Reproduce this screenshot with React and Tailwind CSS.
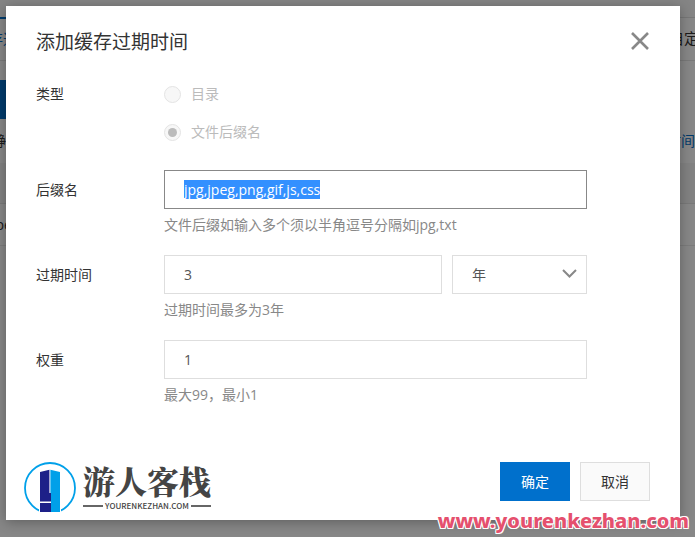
import React, { useEffect, useRef, useState } from 'react';

const inputClass = "h-[39px] border border-[#dedede] bg-white px-[19px] text-sm text-[#555] outline-none rounded-none focus:border-[#888]";

function PageBehind() {
    return (
        <div className="min-h-screen bg-white text-sm text-[#333] overflow-hidden" aria-hidden="true">
            <div className="h-[17px] bg-[#fbfbfb]"></div>
            <div className="flex justify-between h-11 border-b border-[#e5e5e5]">
                <div className="-ml-3 w-24 border-t-2 border-[#0070cc] text-[#0070cc] flex items-center whitespace-nowrap text-[15px]">存过期</div>
                <div className="flex-1 border-t border-[#e0e0e0] flex items-center justify-end">
                    <span className="-mr-1 text-[15px]">自定</span>
                </div>
            </div>
            <div className="mt-[19px] h-[39px] w-20 bg-[#0070cc]"></div>
            <div className="flex justify-between items-center h-11">
                <span className="-ml-2">静态</span>
                <span className="text-[#0070cc]">时间</span>
            </div>
            <div className="h-[41px] bg-[#f5f5f5] border-b border-[#e5e5e5]"></div>
            <div className="h-[42px] border-b border-[#ebebeb] flex items-center">
                <span className="-ml-2">jpeg</span>
            </div>
        </div>
    );
}

function Logo() {
    return (
        <div className="flex gap-[7px]">
            <svg width="52" height="50" viewBox="0 0 52 50" aria-hidden="true">
                <circle cx="26" cy="26" r="25" fill="none" stroke="#00a0e9" strokeWidth="1.8" />
                <path d="M15 8h22v42H15z" fill="#fff" />
                <path d="M16 10 25.4 7.8V31H27V39.5H16z" fill="#1d2088" />
                <path d="M16 41H27V50H16z" fill="#1d2088" />
                <path d="M26.4 7.8 36 10V50H27V31h-.6z" fill="#00a0e9" />
            </svg>
            <div className="text-[#444]">
                <div className="text-[32px] leading-9 pb-0.5 font-black whitespace-nowrap font-['Noto_Serif_CJK_SC','Noto_Sans_CJK_SC',serif]">游人客栈</div>
                <div className="flex items-center gap-0.5">
                    <span className="flex-1 h-0.5 bg-[#666]"></span>
                    <span className="text-[8px] leading-3 font-medium font-['Noto_Sans_CJK_SC',sans-serif]">YOURENKEZHAN.COM</span>
                    <span className="flex-1 h-0.5 bg-[#666]"></span>
                </div>
            </div>
        </div>
    );
}

function Field({ label, id, hint, children }) {
    return (
        <div className="flex items-start">
            <label htmlFor={id} className="w-32 shrink-0 leading-[39px] text-[#333]">{label}</label>
            <div className="flex-1 max-w-[423px]">
                <div className="flex gap-2.5">{children}</div>
                <p className="leading-8 text-[#888]">{hint}</p>
            </div>
        </div>
    );
}

function Radio({ label, value, checked }) {
    return (
        <label className="flex items-center gap-2.5 h-9 text-[#bbb]">
            <input
                type="radio"
                name="type"
                value={value}
                defaultChecked={checked}
                disabled
                className="appearance-none w-[17px] h-[17px] rounded-full border border-[#e4e4e4] bg-[#f7f7f7] flex items-center justify-center checked:before:content-[''] checked:before:w-[9px] checked:before:h-[9px] checked:before:rounded-full checked:before:bg-[#bbb]"
            />
            {label}
        </label>
    );
}

export default function App() {
    const suffixRef = useRef(null);
    const [suffix, setSuffix] = useState('jpg,jpeg,png,gif,js,css');
    const [expire, setExpire] = useState('3');
    const [weight, setWeight] = useState('1');

    useEffect(() => {
        suffixRef.current.focus();
        suffixRef.current.select();
    }, []);

    return (
        <div className="relative font-['Open_Sans','Noto_Sans_CJK_SC',sans-serif]">
            <PageBehind />

            {/* Overlay */}
            <div className="absolute inset-0 bg-black/47 pt-1.5 pl-1.5 pr-[15px]">
                <form
                    role="dialog"
                    aria-labelledby="dialog-title"
                    className="bg-white shadow-[0_2px_12px_rgba(0,0,0,0.3)] text-sm"
                    onSubmit={(e) => e.preventDefault()}
                >
                    <div className="flex items-center justify-between h-[70px] px-[30px]">
                        <h1 id="dialog-title" className="pt-1 text-[19px] text-[#333]">添加缓存过期时间</h1>
                        <button type="button" aria-label="关闭" className="text-[#888]">
                            <svg width="20" height="20" viewBox="0 0 20 20" fill="none" stroke="currentColor" strokeWidth="2.6">
                                <path d="M2 2l16 16M18 2L2 18" />
                            </svg>
                        </button>
                    </div>

                    <div className="px-[30px]">
                        <fieldset className="flex items-start">
                            <legend className="float-left w-32 leading-9 text-[#333]">类型</legend>
                            <div className="flex flex-col gap-0.5">
                                <Radio label="目录" value="dir" />
                                <Radio label="文件后缀名" value="suffix" checked />
                            </div>
                        </fieldset>

                        <div className="mt-5 flex flex-col gap-3.5">
                            <Field label="后缀名" id="suffix" hint="文件后缀如输入多个须以半角逗号分隔如jpg,txt">
                                <input
                                    id="suffix"
                                    ref={suffixRef}
                                    type="text"
                                    value={suffix}
                                    onChange={(e) => setSuffix(e.target.value)}
                                    className={`${inputClass} w-full selection:bg-[#3390ff] selection:text-white`}
                                />
                            </Field>
                            <Field label="过期时间" id="expire" hint="过期时间最多为3年">
                                <input
                                    id="expire"
                                    type="text"
                                    value={expire}
                                    onChange={(e) => setExpire(e.target.value)}
                                    className={`${inputClass} flex-1 min-w-0`}
                                />
                                <div className="relative w-[135px]">
                                    <select aria-label="时间单位" className={`${inputClass} appearance-none w-full`}>
                                        <option>年</option>
                                    </select>
                                    <svg className="absolute right-2.5 top-3.5 pointer-events-none text-[#888]" width="15" height="10" viewBox="0 0 15 10" fill="none" stroke="currentColor" strokeWidth="2">
                                        <path d="M1 1l6.5 6.5L14 1" />
                                    </svg>
                                </div>
                            </Field>
                            <Field label="权重" id="weight" hint="最大99，最小1">
                                <input
                                    id="weight"
                                    type="text"
                                    value={weight}
                                    onChange={(e) => setWeight(e.target.value)}
                                    className={`${inputClass} w-full`}
                                />
                            </Field>
                        </div>
                    </div>

                    <div className="flex items-start justify-between mt-[51px] pl-[18px] pr-[30px] pb-2">
                        <Logo />
                        <div className="flex gap-2.5">
                            <button type="submit" className="w-[70px] h-[39px] bg-[#0070cc] text-white">确定</button>
                            <button type="button" className="w-[70px] h-[39px] bg-[#fafafa] border border-[#dedede] text-[#333]">取消</button>
                        </div>
                    </div>
                </form>
            </div>

            <div className="absolute bottom-0 right-1.5 text-[20px] leading-8 font-extrabold font-['Noto_Sans','Open_Sans',sans-serif] text-[#e5506e] [text-shadow:1px_1px_0_#fff,-1px_-1px_0_#fff,1px_-1px_0_#fff,-1px_1px_0_#fff]">
                www.yourenkezhan.com
            </div>
        </div>
    );
}
